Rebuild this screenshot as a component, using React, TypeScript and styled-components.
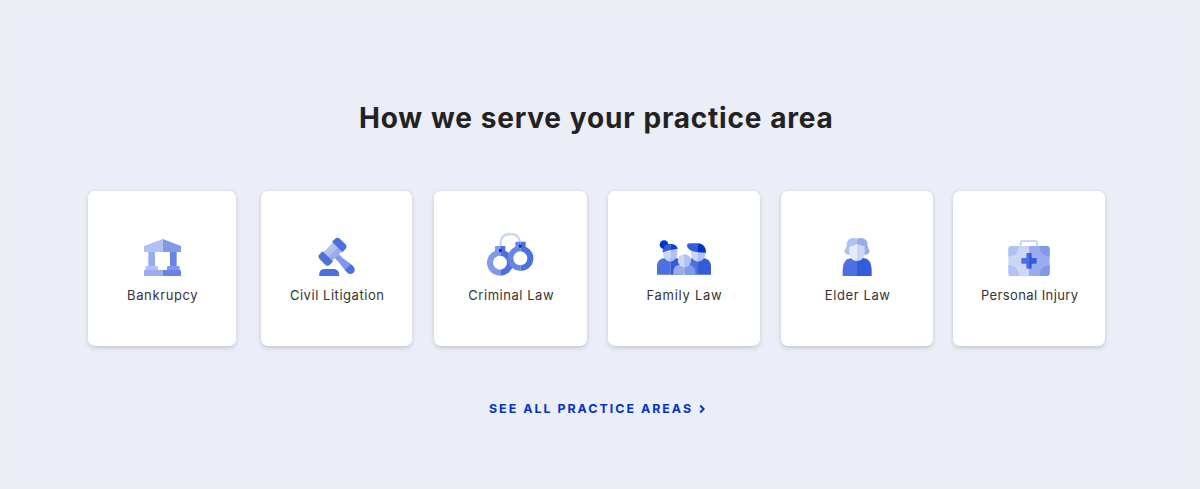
import React from "react";
import styled, { createGlobalStyle } from "styled-components";

const GlobalStyle = createGlobalStyle`
  * { box-sizing: border-box; }
  body { margin: 0; font-family: Inter, "Open Sans", sans-serif; background: #ebeef6; }
`;

const Section = styled.section`
  height: 489px;
  padding: 98px 0 0 88px;
  overflow: hidden;
  background: #ebeef6;
  box-shadow: inset 0 0 14px 2px #ebeff2;
`;

const Title = styled.h2`
  width: 1017px;
  margin: 0;
  padding-left: 271px;
  font-size: 28px;
  line-height: 40px;
  font-weight: 700;
  letter-spacing: 0.8px;
  word-spacing: 0.6px;
  white-space: nowrap;
  color: #222;
`;

const Cards = styled.div`
  display: flex;
  margin-top: 52.5px;
`;

const Card = styled.article<{ $width: number; $gap: number }>`
  flex: none;
  width: ${(p) => p.$width}px;
  height: 155.5px;
  margin-right: ${(p) => p.$gap}px;
  padding-top: 39.5px;
  display: flex;
  flex-direction: column;
  align-items: center;
  border-radius: 7px;
  background: #fff;
  box-shadow: 0 1.5px 4px rgba(40, 50, 70, 0.2);
`;

const Icon = styled.svg`
  display: block;
  height: 52px;
`;

const Label = styled.div<{ $spacing: number }>`
  margin-top: 3px;
  padding-left: 1.4px;
  font-size: 13px;
  line-height: 20px;
  letter-spacing: ${(p) => p.$spacing}px;
  white-space: nowrap;
  color: #333;
`;

const AllLink = styled.a`
  display: flex;
  align-items: center;
  margin: 53px 0 0 401px;
  color: #0033cc;
  font-size: 12.4px;
  line-height: 20px;
  font-weight: 700;
  letter-spacing: 2.01px;
  white-space: nowrap;
`;

const Chevron = styled.svg`
  width: 6px;
  height: 10px;
  margin-left: 6px;
`;

const Bank = () => (
  <Icon viewBox="0 0 180 156" width="60">
    <path fill="#b1c1f3" d="M36 48 92.500 27V66H36z" />
    <path fill="#809ae9" d="M92.500 27 147 48V66H92.500z" />
    <path fill="#99adee" d="M49 66H69V108H49z" />
    <path fill="#6685e5" d="M114 66H134V108H114z" />
    <path fill="#b1c1f3" d="M44 108H74Q78 108 78 112V121H41V112Q41 108 44 108" />
    <path fill="#809ae9" d="M108 108H140Q143 108 143 112V121H105V112Q105 108 108 108" />
    <path fill="#99adee" d="M39 120H92.500V138H36V123Q36 120 39 120" />
    <path fill="#6685e5" d="M92.500 120H144Q147 120 147 123V138H92.500z" />
  </Icon>
);

const Gavel = () => (
  <Icon viewBox="2.500 0 180 156" width="60">
    <g transform="translate(79 65) rotate(45)">
      <path fill="#809ae9" d="M18 -8H34L66 -13V13L34 9H18z" />
      <path fill="#4c70de" d="M65 -13H76A13 13 0 0 1 76 13H65z" />
      <path fill="#b1c1f3" d="M-18 -24H1V24H-18z" />
      <path fill="#99adee" d="M1 -24H19V24H1z" />
      <path fill="#4c70de" d="M-22 -20V-32Q-22 -43 -11 -43H11Q22 -43 22 -32V-20z" />
      <path fill="#4c70de" d="M-22 20V32Q-22 43 -11 43H11Q22 43 22 32V20z" />
    </g>
    <path fill="#4c70de" d="M39 138V134Q39 117 56 117H81Q99 117 99 134V138z" />
  </Icon>
);

const Handcuffs = () => (
  <Icon viewBox="3 6 180 156" width="60">
    <path d="M62 54V46Q62 18 90 18T119 42" fill="none" stroke="#ccd6f7" strokeWidth="7" />
    <path fill="#809ae9" d="M45 54H61V143A39 39 0 0 1 45 68z" />
    <path fill="#4c70de" d="M61 54H76V68A39 39 0 0 1 61 143z" />
    <circle cx="60" cy="104" r="21" fill="#fff" />
    <path fill="#6685e5" d="M106 41H122V129A38 38 0 0 1 106 56z" />
    <path fill="#4c70de" d="M122 41H137V56A38 38 0 0 1 122 129z" />
    <circle cx="121" cy="91" r="21" fill="#fff" />
    <rect x="57" y="63" width="8" height="9" fill="#0033cc" />
    <rect x="117" y="50" width="8" height="9" fill="#0033cc" />
  </Icon>
);

const Family = () => (
  <Icon viewBox="0 0 204 156" width="68">
    <path fill="#4c70de" d="M21 134V108Q22 86 45 84H61V134z" />
    <path fill="#335cdb" d="M61 84H78Q98 88 98 108V134H61z" />
    <path fill="#4c70de" d="M106 134V108Q107 86 129 84H144V134z" />
    <path fill="#335cdb" d="M144 84H161Q182 87 183 108V134H144z" />
    <circle cx="42" cy="44" r="13" fill="#0033cc" />
    <path fill="#ccd6f7" d="M39 65H61V95Q39 92 39 68z" />
    <path fill="#b1c1f3" d="M61 56H82V68Q82 92 61 95z" />
    <path fill="#335cdb" d="M38 67Q39 41 61 41V60Q51 64 38 67" />
    <path fill="#0f3fcf" d="M61 41Q81 42 83 56L61 60z" />
    <path fill="#ccd6f7" d="M123 60 144 65V95Q123 92 123 70z" />
    <path fill="#b1c1f3" d="M144 65H166V70Q166 92 144 95z" />
    <path fill="#335cdb" d="M144 40H121Q111 40 111 47Q112 62 144 67z" />
    <path fill="#0033cc" d="M144 40Q168 42 168 68Q156 67 144 67z" />
    <path fill="#99adee" d="M70 134V126Q71 104 91 104H103V134z" />
    <path fill="#809ae9" d="M103 104H116Q135 106 136 126V134H103z" />
    <circle cx="103" cy="92" r="19.500" fill="#ccd6f7" />
    <path fill="#b1c1f3" d="M103 72.500A19.500 19.500 0 0 1 103 111.500z" />
  </Icon>
);

const Elder = () => (
  <Icon viewBox="-3 0 180 156" width="60">
    <path fill="#4c70de" d="M44 138V119Q45 88 69 84H87V138z" />
    <path fill="#335cdb" d="M87 84H108Q130 88 131 119V138H87z" />
    <path
      fill="#b1c1f3"
      d="M87 26Q81 23 73 24Q56 27 56 44Q56 50 53 55Q47 62 51 69Q56 76 67 75L87 60z"
    />
    <path
      fill="#99adee"
      d="M87 26Q94 23 102 24Q118 27 119 44Q119 50 121 55Q127 62 123 69Q118 76 107 75L87 60z"
    />
    <path fill="#e6ebfb" d="M87 42Q80 47 64 50V68Q65 92 87 93z" />
    <path fill="#ccd6f7" d="M87 42Q98 48 110 49V68Q109 92 87 93z" />
  </Icon>
);

const FirstAid = () => (
  <Icon viewBox="-3 0 180 156" width="60">
    <path d="M62 49V40Q62 33 69 33H104Q111 33 111 40V49" fill="none" stroke="#ccd6f7" strokeWidth="6" />
    <path fill="#ccd6f7" d="M35 48H87V138H35Q25 138 25 128V58Q25 48 35 48" />
    <path fill="#99adee" d="M87 48H139Q149 48 149 58V128Q149 138 139 138H87z" />
    <path fill="#b1c1f3" d="M35 48H57Q56 78 25 80V58Q25 48 35 48M25 105Q55 107 57 138H35Q25 138 25 128z" />
    <path fill="#809ae9" d="M118 48H139Q149 48 149 58V80Q119 78 118 48M149 105V128Q149 138 139 138H118Q119 107 149 105" />
    <path fill="#4c70de" d="M87 69H82Q79 69 79 72V84H67Q64 84 64 87V98Q64 101 67 101H79V113Q79 116 82 116H87z" />
    <path fill="#335cdb" d="M87 69H92Q95 69 95 72V84H107Q110 84 110 87V98Q110 101 107 101H95V113Q95 116 92 116H87z" />
  </Icon>
);

const areas = [
  { name: "Bankrupcy", icon: Bank, width: 148, gap: 25, spacing: 0.62 },
  { name: "Civil Litigation", icon: Gavel, width: 151, gap: 22, spacing: 0.54 },
  { name: "Criminal Law", icon: Handcuffs, width: 153, gap: 20.5, spacing: 0.54 },
  { name: "Family Law", icon: Family, width: 152.5, gap: 21, spacing: 0.72 },
  { name: "Elder Law", icon: Elder, width: 152, gap: 20, spacing: 0.6 },
  { name: "Personal Injury", icon: FirstAid, width: 152, gap: 0, spacing: 0.4 },
];

export default function App() {
  return (
    <Section>
      <GlobalStyle />
      <Title>How we serve your practice area</Title>
      <Cards>
        {areas.map(({ name, icon: Drawing, width, gap, spacing }) => (
          <Card key={name} $width={width} $gap={gap}>
            <Drawing />
            <Label $spacing={spacing}>{name}</Label>
          </Card>
        ))}
      </Cards>
      <AllLink>
        SEE ALL PRACTICE AREAS
        <Chevron viewBox="0 0 6 10">
          <path d="M1.200 1.500 4.700 5 1.200 8.500" fill="none" stroke="currentColor" strokeWidth="1.900" />
        </Chevron>
      </AllLink>
    </Section>
  );
}
